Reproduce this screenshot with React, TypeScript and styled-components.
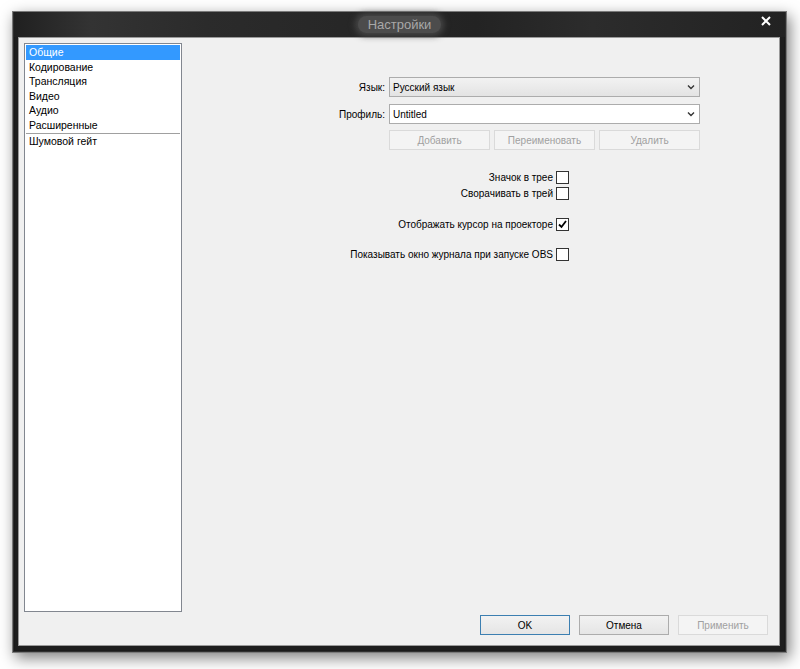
import React from "react";
import styled, { createGlobalStyle } from "styled-components";

const Global = createGlobalStyle`
  html, body { margin: 0; padding: 0; background: #ffffff; }
  body { font-family: "Liberation Sans", Arial, sans-serif; font-size: 10px; color: #000; }
  #root { width: 800px; height: 669px; }
`;

const Page = styled.div`
  width: 800px;
  height: 669px;
  padding: 11px 0 0 12px;
  box-sizing: border-box;
`;

const Frame = styled.div`
  width: 775px;
  height: 642px;
  box-sizing: border-box;
  border: 1px solid #7a7a7a;
  background: #1e1e1e;
  box-shadow: 3px 5px 14px rgba(0, 0, 0, 0.5), inset 0 0 0 1px #2f2f2f, inset 0 0 0 2px #1a1a1a;
  display: flex;
  flex-direction: column;
  padding: 0 6px 6px 5px;
`;

const TitleBar = styled.div`
  height: 25px;
  flex: none;
  position: relative;
  display: flex;
  align-items: center;
  justify-content: center;
  background: linear-gradient(90deg, #202020 0%, #333 10%, #2b2b2b 25%, #232323 60%, #2c2c2c 75%, #222 100%);
  margin: 0 -5px 0 -4px;
`;

const TitlePill = styled.div`
  font-family: "Liberation Sans", Arial, sans-serif;
  font-size: 13px;
  color: #a8a8a8;
  padding: 1px 10px;
  border-radius: 10px;
  background: #4c4c4c;
  box-shadow: 0 0 6px 3px rgba(76, 76, 76, 0.85);
  margin-top: -1px;
`;

const CloseBtn = styled.div`
  position: absolute;
  right: 14px;
  top: 4px;
  width: 10px;
  height: 10px;
`;

const Client = styled.div`
  flex: 1;
  background: #f0f0f0;
  border: 1px solid #9a9a9a;
  display: flex;
  flex-direction: column;
  padding: 5px 11px 10px 5px;
  min-height: 0;
`;

const Main = styled.div`
  flex: 1;
  display: flex;
  min-height: 0;
`;

const List = styled.div`
  width: 158px;
  height: 569px;
  box-sizing: border-box;
  background: #fff;
  border: 1px solid #828790;
  padding: 1px;
  flex: none;
`;

const Item = styled.div<{ $selected?: boolean; $sep?: boolean }>`
  height: 14.6px;
  line-height: 14.6px;
  padding-left: 3px;
  font-size: 10.5px;
  background: ${(p) => (p.$selected ? "#3399ff" : "transparent")};
  color: ${(p) => (p.$selected ? "#fff" : "#000")};
  border-top: ${(p) => (p.$sep ? "1px solid #a0a0a0" : "none")};
  white-space: nowrap;
`;

const Right = styled.div`
  flex: 1;
  display: flex;
  flex-direction: column;
  align-items: flex-end;
  padding-top: 34px;
`;

const FormGrid = styled.div`
  display: grid;
  grid-template-columns: auto 311px;
  column-gap: 4px;
  row-gap: 7px;
  align-items: center;
  margin-right: 68px;
`;

const Label = styled.div`
  text-align: right;
`;

const Combo = styled.div<{ $readonly?: boolean }>`
  height: 20px;
  box-sizing: border-box;
  border: 1px solid #acacac;
  background: ${(p) => (p.$readonly ? "linear-gradient(#f2f2f2, #e3e3e3)" : "#fff")};
  display: flex;
  align-items: center;
  justify-content: space-between;
  padding: 0 4px 0 3px;
`;

const ButtonRow = styled.div`
  display: flex;
  gap: 4px;
  margin-top: -1px;
`;

const Btn = styled.div<{ $disabled?: boolean; $default?: boolean; $w?: number }>`
  width: ${(p) => p.$w ?? 100}px;
  height: 20px;
  box-sizing: border-box;
  display: flex;
  align-items: center;
  justify-content: center;
  border: 1px solid ${(p) => (p.$default ? "#3c7fb1" : p.$disabled ? "#dadada" : "#acacac")};
  background: ${(p) => (p.$disabled ? "#f4f4f4" : "linear-gradient(#f2f2f2, #e5e5e5)")};
  color: ${(p) => (p.$disabled ? "#a0a0a0" : "#000")};
`;

const Checks = styled.div`
  display: flex;
  flex-direction: column;
  align-items: flex-end;
  margin-right: 199px;
  margin-top: 19px;
`;

const CheckRow = styled.div<{ $gap?: number }>`
  display: flex;
  align-items: center;
  gap: 3px;
  height: 16px;
  margin-top: ${(p) => p.$gap ?? 0}px;
`;

const Box = styled.div`
  width: 13px;
  height: 13px;
  box-sizing: border-box;
  border: 1px solid #333;
  background: #fff;
  display: flex;
  align-items: center;
  justify-content: center;
`;

const Footer = styled.div`
  display: flex;
  justify-content: flex-end;
  gap: 9px;
  padding-top: 3px;
`;

const Chevron = () => (
  <svg width="8" height="6" viewBox="0 0 8 6">
    <path d="M1 1.5 L4 4.5 L7 1.5" stroke="#333" strokeWidth="1.4" fill="none" />
  </svg>
);

const Check = ({ checked }: { checked?: boolean }) => (
  <Box>
    {checked && (
      <svg width="9" height="9" viewBox="0 0 9 9">
        <path d="M1 4.5 L3.5 7 L8 1" stroke="#000" strokeWidth="1.8" fill="none" />
      </svg>
    )}
  </Box>
);

export default function App() {
  return (
    <>
      <Global />
      <Page>
        <Frame>
          <TitleBar>
            <TitlePill>Настройки</TitlePill>
            <CloseBtn>
              <svg width="10" height="10" viewBox="0 0 10 10">
                <path d="M1 1 L9 9 M9 1 L1 9" stroke="#fff" strokeWidth="2" />
              </svg>
            </CloseBtn>
          </TitleBar>
          <Client>
            <Main>
              <List>
                <Item $selected>Общие</Item>
                <Item>Кодирование</Item>
                <Item>Трансляция</Item>
                <Item>Видео</Item>
                <Item>Аудио</Item>
                <Item>Расширенные</Item>
                <Item $sep>Шумовой гейт</Item>
              </List>
              <Right>
                <FormGrid>
                  <Label>Язык:</Label>
                  <Combo $readonly>
                    <span>Русский язык</span>
                    <Chevron />
                  </Combo>
                  <Label>Профиль:</Label>
                  <Combo>
                    <span>Untitled</span>
                    <Chevron />
                  </Combo>
                  <span />
                  <ButtonRow>
                    <Btn $disabled $w={101}>Добавить</Btn>
                    <Btn $disabled $w={101}>Переименовать</Btn>
                    <Btn $disabled $w={101}>Удалить</Btn>
                  </ButtonRow>
                </FormGrid>
                <Checks>
                  <CheckRow>
                    <span>Значок в трее</span>
                    <Check />
                  </CheckRow>
                  <CheckRow>
                    <span>Сворачивать в трей</span>
                    <Check />
                  </CheckRow>
                  <CheckRow $gap={15}>
                    <span>Отображать курсор на проекторе</span>
                    <Check checked />
                  </CheckRow>
                  <CheckRow $gap={14}>
                    <span>Показывать окно журнала при запуске OBS</span>
                    <Check />
                  </CheckRow>
                </Checks>
              </Right>
            </Main>
            <Footer>
              <Btn $default $w={90}>OK</Btn>
              <Btn $w={90}>Отмена</Btn>
              <Btn $disabled $w={90}>Применить</Btn>
            </Footer>
          </Client>
        </Frame>
      </Page>
    </>
  );
}
